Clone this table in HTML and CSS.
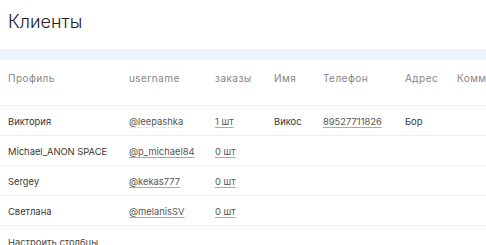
FILE: index.html
```html
<!DOCTYPE html>
<html lang="ru">
<head>
<meta charset="utf-8">
<title>Клиенты</title>
<link rel="stylesheet" href="styles.css">
</head>
<body>
<div class="page">
  <h1 class="title">Клиенты</h1>
  <div class="band"></div>
  <div class="table">
    <div class="row head">
      <div>Профиль</div>
      <div>username</div>
      <div>заказы</div>
      <div>Имя</div>
      <div>Телефон</div>
      <div>Адрес</div>
      <div>Комментарий</div>
    </div>
    <div class="row">
      <div>Виктория</div>
      <div><a class="link plain">@leepashka</a></div>
      <div><a class="link">1 шт</a></div>
      <div>Викос</div>
      <div><a class="link">89527711826</a></div>
      <div>Бор</div>
      <div></div>
    </div>
    <div class="row">
      <div>Michael_ANON SPACE</div>
      <div><a class="link">@p_michael84</a></div>
      <div><a class="link">0 шт</a></div>
      <div></div><div></div><div></div><div></div>
    </div>
    <div class="row">
      <div>Sergey</div>
      <div><a class="link">@kekas777</a></div>
      <div><a class="link">0 шт</a></div>
      <div></div><div></div><div></div><div></div>
    </div>
    <div class="row">
      <div>Светлана</div>
      <div><a class="link">@melanisSV</a></div>
      <div><a class="link">0 шт</a></div>
      <div></div><div></div><div></div><div></div>
    </div>
    <div class="setup">Настроить столбцы</div>
  </div>
</div>
</body>
</html>
```
FILE: styles.css
```css
html, body {
  margin: 0;
  padding: 0;
  background: #fff;
  overflow: hidden;
}
body {
  font-family: Inter, "Noto Sans", sans-serif;
  color: #383838;
}
.page {
  width: 486px;
  height: 245px;
  overflow: hidden;
}
.title {
  margin: 0;
  height: 49px;
  box-sizing: border-box;
  padding: 11px 8px 0;
  font-size: 18px;
  line-height: 22px;
  font-weight: 300;
  color: #222;
}
.band {
  height: 11px;
  background: #edf3fb;
}
.row {
  display: grid;
  grid-template-columns: 121px 86px 59px 49px 82px 52px 200px;
  padding-left: 8px;
  height: 30px;
  box-sizing: border-box;
  border-top: 1px solid #efefef;
  font-size: 9.4px;
  line-height: 12px;
  white-space: nowrap;
  align-items: start;
  padding-top: 10px;
}
.row.head {
  height: 45px;
  border-top: 0;
  padding-top: 12px;
  font-size: 10px;
  letter-spacing: 0.45px;
  color: #858585;
}
.link {
  color: #555;
  text-decoration: underline;
  text-decoration-color: #aaa;
  text-underline-offset: 2px;
}
.link.plain {
  text-decoration-color: #e8e8e8;
}
.setup {
  border-top: 1px solid #efefef;
  padding: 11px 8px 0;
  font-size: 9.4px;
  line-height: 12px;
  color: #444;
}
```
